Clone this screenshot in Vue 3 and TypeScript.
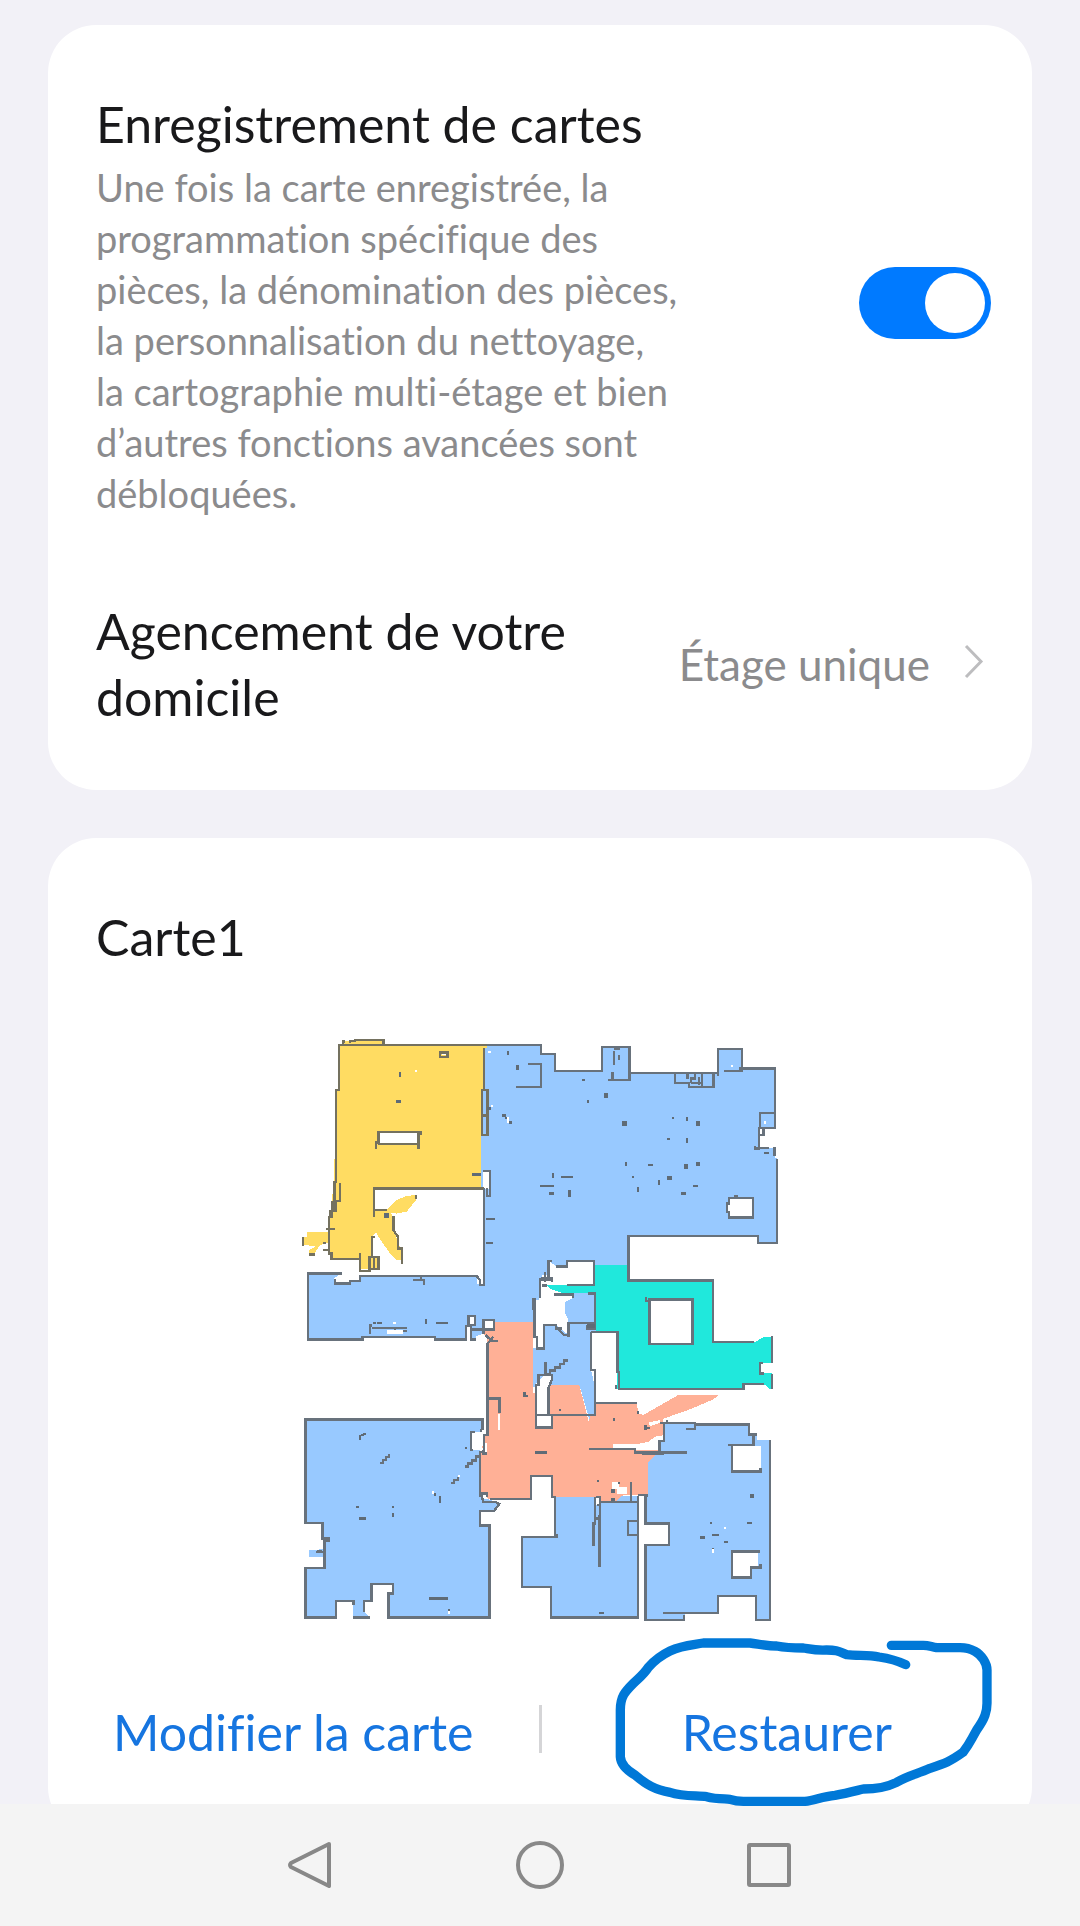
<script setup lang="ts">
import { ref } from 'vue'

const saveMaps = ref(true)

const descriptionLines: string[] = [
  'Une fois la carte enregistrée, la',
  'programmation spécifique des',
  'pièces, la dénomination des pièces,',
  'la personnalisation du nettoyage,',
  'la cartographie multi-étage et bien',
  'd’autres fonctions avancées sont',
  'débloquées.',
]

// Small obstacles detected on the floor: [x, y, width, height]
const obstacles: number[][] = [
  [327, 127, 6, 13], [318, 210, 15, 9], [651, 63, 6, 11], [678, 105, 9, 14], [637, 252, 12, 9], [645, 260, 6, 8], [657, 273, 8, 8],
  [876, 147, 9, 6], [891, 210, 6, 9], [942, 189, 12, 15], [996, 273, 15, 15], [1147, 262, 5, 5], [1188, 261, 6, 12],
  [1218, 273, 12, 15], [1131, 324, 9, 6], [1188, 324, 6, 15], [1005, 396, 6, 12], [1074, 402, 15, 6], [1182, 402, 12, 14],
  [1218, 396, 12, 12], [1026, 438, 6, 6], [1131, 438, 15, 12], [1104, 450, 6, 15], [1041, 471, 6, 15], [1173, 486, 15, 9],
  [1209, 465, 15, 6], [786, 429, 6, 15], [813, 438, 36, 6], [750, 465, 42, 6], [777, 486, 15, 9], [834, 480, 9, 21],
  [282, 549, 15, 15], [546, 429, 28, 9], [587, 564, 28, 6], [587, 636, 22, 6], [592, 232, 12, 7],
  [249, 876, 9, 6], [262, 876, 14, 6], [405, 867, 6, 14], [438, 876, 36, 6], [699, 1086, 9, 15], [705, 1095, 9, 6],
  [207, 1215, 6, 15], [213, 1212, 9, 6], [219, 1208, 9, 6], [198, 1428, 9, 6], [207, 1461, 21, 9], [306, 1428, 6, 6],
  [306, 1449, 6, 12], [432, 1390, 6, 7], [447, 1398, 6, 20], [417, 1701, 57, 9], [474, 1737, 6, 8], [525, 1251, 6, 6],
  [807, 1137, 6, 6], [969, 1165, 6, 7], [735, 1263, 36, 9], [921, 1350, 6, 6], [964, 1377, 12, 12], [984, 1356, 6, 6],
  [964, 1403, 12, 10], [927, 1745, 15, 7], [1380, 1392, 12, 12], [1371, 1476, 15, 6], [1260, 1476, 6, 6], [1230, 1518, 15, 9],
  [1266, 1512, 21, 6], [1302, 1533, 12, 6], [1266, 1554, 6, 8], [1062, 1185, 9, 14], [1071, 1190, 9, 6], [1041, 1144, 6, 8],
  [892, 882, 22, 12], [1422, 366, 15, 6],
]

// Unscanned specks inside rooms
const specks: number[][] = [
  [594, 63, 9, 6], [375, 120, 6, 6], [602, 225, 6, 7], [651, 262, 6, 18], [1323, 105, 6, 6], [1422, 273, 6, 9],
  [624, 1152, 6, 48], [426, 1383, 6, 9], [504, 1336, 6, 6], [474, 1743, 6, 8], [1302, 1491, 7, 7], [1266, 1558, 6, 11],
  [309, 876, 8, 6], [291, 900, 48, 12],
]
</script>

<template>
  <div class="screen">
    <main class="content">
      <section class="card">
        <div class="row">
          <div class="text">
            <label class="title" for="save-maps">Enregistrement de cartes</label>
            <p id="save-desc" class="description">
              <template v-for="(line, i) in descriptionLines" :key="i">{{ line }}<br v-if="i < descriptionLines.length - 1"></template>
            </p>
          </div>
          <input id="save-maps" v-model="saveMaps" class="switch" type="checkbox" role="switch" aria-describedby="save-desc">
        </div>
        <button class="row layout" type="button">
          <span class="title layout-name">Agencement de votre domicile</span>
          <span class="value">Étage unique</span>
          <svg class="chevron" viewBox="0 0 20 36" aria-hidden="true"><path d="M2 2 17 17.500 2 33" /></svg>
        </button>
      </section>

      <section class="card map-card">
        <h2 class="title">Carte1</h2>
        <svg class="map" viewBox="0 0 1500 1800" role="img" aria-label="Carte1" shape-rendering="crispEdges">
          <g class="blue">
            <path d="M582 45H753V72H795V123H936V50H1018V130H1284V57H1356V115H1455V293H1407V355H1455V385H1461V638H1404V618H1015V705H911V693H830V708H798L775 693V735H757V750H747V810H728V875H612L582 925H528V928H434V921H217V928H54V730H155L132 745V762H180V752H210V738H560V762H582V475H574V180H582Z" />
            <path d="M840 790H917V905H903V1020L917 1080V1155L900 1175 868 1065H785L775 1035 738 1070H728V955H760V885H800L835 915 830 870 822 850V820L840 805Z" />
            <path d="M46 1168H577V1205H543V1260H570V1400L625 1418 612 1443H570V1486H598V1762H295V1690H308V1662H244V1712H222V1745L240 1762H190V1712H137V1762H46V1614H103V1580H57V1560L97 1558 117 1525H97V1479H46Z" />
            <path d="M795 1398H1073V1420H1044V1762H782V1671H696V1520H795Z" />
            <path d="M1120 1178H1215V1183H1376V1213H1400V1230H1440V1770H1398V1698H1284V1748H1184V1770H1066V1545H1136V1480H1066V1290L1108 1265V1235H1120Z" />
          </g>
          <path class="yellow" d="M146 45H590V55H582V180H574V475H252V540H290L320 510 350 498 378 495V510L350 545 320 551 300 548 310 560V600L322 630 335 665V690H320L300 670 275 635 258 608 245 620V678H265V718H210V687H122V560H117V600L125 515 132 455 138 180H146ZM50 605H120V640H100L88 648 75 668 58 670V660L78 650 50 645H38V620H50ZM158 40 170 32 195 30H280V45H158ZM117 560H130V690H122ZM125 510H140V560H122Z" />
          <path class="teal" d="M911 705H1015V751H1269V935H1398L1420 921H1447V1077H980V905H917V790H795L768 765H911Z" />
          <path class="pink" d="M590 875H728V975H730V1090H738V1195H785V1155H775V1065H868L896 1175 902 1155H915V1118H1040L1045 1150 1060 1155 1165 1095H1287L1270 1108 1195 1140 1120 1166V1235H1107V1265L1073 1300V1395H1040L1000 1395 978 1413H930V1400H785V1338H722V1407H600L570 1400V1275L592 1200V940L575 905Z" />

          <g class="white">
            <path d="M265 308H385V341H265ZM580 422H600V476H580ZM456 68H468V75H456Z" />
            <path d="M1317 503H1389V562H1317V548H1311V520H1317ZM1078 808H1207V941H1078ZM1410 998H1447V1030H1410ZM1365 1065H1425L1438 1075V1081H1365Z" />
            <path d="M535 860H555V887H540V925H530V888H535ZM575 870H612V898H590L580 912 592 920V948H558V920L575 912Z" />
            <path d="M747 750 775 775 820 790 848 798 848 805 825 815V850L835 870V915L820 900 800 885H762V955H738V920L730 850V810H747Z" />
            <path d="M775 695 800 710H830V695H911V765H790L775 745ZM903 905H980V1077H985V1118H917V1080L903 1020ZM737 1062 765 1035 785 1040 775 1075V1155H785V1195H738Z" />
            <path d="M970 1242H1045L1075 1235 1100 1218 1120 1216V1230H1108V1260H1060L1030 1258H970ZM1075 1178 1110 1170V1178L1080 1189ZM965 1357H988V1370H1011V1392H980V1378H965ZM1044 1398H1066V1770H1044ZM1066 1480H1136V1545H1066Z" />
            <path d="M1326 1247H1412V1324H1326ZM1326 1564H1405V1610H1385V1642H1326ZM543 1205H555V1210H575V1200H585V1240H592V1270H570L580 1250 560 1235 545 1260ZM572 1392H590V1407H572ZM612 1405H628V1416H612ZM915 1400H928V1425H915Z" />
          </g>

          <g class="wall yellow-wall">
            <path d="M590 45H146V180H138V455H133V515H125V560H117V670H124V687H210V722H238V680H265V716H238M252 680V716M158 42V34H165M180 40V32H195V30H280V45M582 55V180M576 180H592V315H576ZM576 256H592M265 341V306H393V315M385 310V358M265 341H385M258 358V332M149 460V512H133V545M138 515V545M120 560V540M582 475H252V562M254 540H290M310 558V600L324 620V655H335V703M245 680V620H255M210 670V722M108 597H134M39 621V647M58 673H76M100 660H117M100 638H108M378 495V507M450 67H472V81H450Z" />
          </g>
          <g class="wall">
            <path d="M590 45H753V72H795V123H936V50H1018V150H955M967 147V127M972 62V104M987 75V90M972 57H990M1018 129H1284M1284 137V57H1356V122H1302M1348 115H1455V293H1407V355H1395V348M1455 248H1409V290M1407 315H1420V293M1407 353H1437M1453 352V378M1461 387V638H1404V618H1015V751H1269V935H1392M1154 130V158H1196V170H1270V132M1235 130V170M1192 132V146M1202 158H1235M1215 130V145H1202V158M1226 140V165M714 101H753V171H678M720 45H753" />
            <path d="M1317 503H1389V562H1317V545H1311V520H1317ZM1332 497H1344M580 422H600V498H590V475M582 475V765H570V750L560 738H210V752H180V760H134V748M155 730H54V928H217V921H434V928H528V888H535V858H555V885H543V928H558M370 750H402V766M392 737V747M543 898H580V912M575 870H612V898H580V870ZM586 915 605 932H624M590 945 610 920M592 940V1215H582V1270M592 1105H628V1150" />
            <path d="M240 911V886H245M245 894H352M315 894V902H352M750 745V805M728 840V808H733V920H740V955H761V885H798V895H815M800 892 822 915H832M835 920V878H915M892 885V895H915V790H893M848 805V793H792M755 766H770M757 740V750H790M765 727V755M758 745H785V755M775 740V693H786M798 709H830V693H911V765H830M903 905H982V1025H986V1077H1360V1062H1422M980 1068H977V1077M903 905V1020H914V1155H738V1065H745V1035H785V1050L775 1075V1155H785V1192H738V1062M766 996V1035M917 1118H1040M1410 1030V998H1420M1410 998V1030H1422M1446 918V1000M1446 1032V1077M1078 808H1207V941H1078ZM1068 800V812H1078" />
            <path d="M577 1200V1168H46V1479H97V1525H117V1533H103V1565M78 1565H103V1614H46V1762H137V1712H190V1725M190 1762H240M222 1745V1712H244V1662H308V1690H295V1762H598V1486H570V1443H612L628 1422 615 1415H580L572 1390H590V1400M577 1201H570M555 1205H543V1260H550M582 1265H570V1400M592 1270H578V1260M600 1407H722V1338H785V1400H795V1520H696V1671H782V1762H1044V1415H930V1530M800 1513V1525M915 1400V1480H910V1547M912 1465H925M917 1400H930V1425H920M928 1455V1610M1023 1357V1413M1044 1473H1013V1515H1044M1044 1395H1073M1044 1398V1762M1073 1398H1066V1480H1136V1545H1066V1770H1182V1755M1120 1748H1284V1698H1398V1770H1440V1230M1402 1213H1376V1183H1215V1178H1110M1215 1180V1197H1188M1390 1212V1245H1315M1326 1246V1324H1411V1315M1405 1570V1564H1326V1642H1383V1612H1411V1602M1122 1178V1232H1108V1265M898 1257H1035V1267H1192M1055 1272H1122M1130 1170V1180" />
          </g>
          <g class="debris">
            <path d="M270 1299H279V1290H288V1281H297V1272M525 1310H534V1300H546V1291H558V1280H572M483 1359H492V1350H504V1341M768 1032H780V1022H795V1012H810V1002H822V992H834M97 1565H80" />
            <path d="M897 1257H968" />
          </g>
          <rect v-for="(o, i) in obstacles" :key="i" class="obstacle" :x="o[0]" :y="o[1]" :width="o[2]" :height="o[3]" />
          <rect v-for="(s, i) in specks" :key="'s' + i" class="speck" :x="s[0]" :y="s[1]" :width="s[2]" :height="s[3]" />
        </svg>
        <div class="actions">
          <button class="action" type="button">Modifier la carte</button>
          <span class="divider"></span>
          <button class="action" type="button">
            Restaurer
            <svg class="highlight" viewBox="0 0 1320 660" aria-hidden="true">
              <path d="M977 164C950 151 925 145 897 141C865 134 835 138 800 134C775 124 770 120 740 120C710 122 695 118 670 114C640 114 620 114 590 108C560 108 540 103 510 99H370C340 105 310 104 270 123C235 140 220 155 205 172C190 195 175 205 160 220C135 245 121 260 121 300V440C122 460 140 480 165 495C200 525 225 539 270 547C310 560 350 556 380 560C410 568 435 566 450 568C465 573 480 574 490 574H675C705 571 725 560 765 556C800 550 825 543 850 537C885 537 915 534 950 517C985 496 1010 493 1050 475C1095 460 1110 455 1149 427C1170 400 1170 395 1190 360C1215 325 1221 305 1221 280V180C1221 160 1205 135 1185 124C1160 110 1145 113 1130 113H1070C1050 109 1045 106 1030 106H934" />
            </svg>
          </button>
        </div>
      </section>
    </main>

    <nav class="system-nav" aria-label="Navigation système">
      <button type="button" aria-label="Retour"><svg viewBox="0 0 48 48"><path d="M43 3 5 22Q3 24 5 26L43 45Z" /></svg></button>
      <button type="button" aria-label="Accueil"><svg viewBox="0 0 48 48"><circle cx="24" cy="24" r="22" /></svg></button>
      <button type="button" aria-label="Applications récentes"><svg viewBox="0 0 48 48"><rect x="3" y="4" width="40" height="40" rx="1" /></svg></button>
    </nav>
  </div>
</template>

<style>
body {
  margin: 0;
  background: #f2f1f7;
}
</style>

<style scoped>
.screen {
  display: flex;
  flex-direction: column;
  height: 100vh;
  color: #19191b;
  font-family: Lato, "Noto Sans", sans-serif;
  font-variant-ligatures: none;
}
.content {
  flex: 1;
  min-height: 0;
  padding: 25px 48px 0;
}
button {
  padding: 0;
  border: 0;
  background: none;
  color: inherit;
  font: inherit;
  font-variant-ligatures: inherit;
  text-align: left;
}
.card {
  box-sizing: border-box;
  padding: 66px 41px 60px 48px;
  border-radius: 48px;
  background: #fff;
}
.row {
  display: flex;
  align-items: center;
  justify-content: space-between;
  width: 100%;
}
.title {
  display: block;
  margin: 0;
  font-size: 50px;
  font-weight: 400;
  line-height: 66px;
}
.description {
  margin: 5px 0 0;
  color: #8b8b8d;
  font-size: 38px;
  line-height: 51px;
}
.switch {
  appearance: none;
  flex: none;
  width: 132px;
  height: 72px;
  margin: 0 0 5px;
  padding: 6px;
  border-radius: 36px;
  background: #b9b9bd;
}
.switch::before {
  content: "";
  display: block;
  width: 60px;
  height: 60px;
  border-radius: 50%;
  background: #fff;
}
.switch:checked {
  background: #007aff;
}
.switch:checked::before {
  margin-left: auto;
}
.layout {
  margin-top: 79px;
}
.layout-name {
  width: 500px;
  margin-right: auto;
}
.value {
  color: #8b8b8d;
  font-size: 44px;
}
.chevron {
  width: 20px;
  height: 36px;
  margin: 0 7px 4px 34px;
  fill: none;
  stroke: #bdbdbf;
  stroke-width: 3;
}
.map-card {
  margin-top: 48px;
  padding: 66px 48px 43px;
}
.map {
  display: block;
  width: 500px;
  margin: 60px auto 0;
}
.blue { fill: #98c9ff; }
.yellow { fill: #ffdc62; }
.teal { fill: #20e8dc; }
.pink { fill: #ffb096; }
.white,
.speck { fill: #fff; }
.wall {
  fill: none;
  stroke: #68727c;
  stroke-width: 7;
}
.yellow-wall { stroke: #74715f; }
.debris {
  fill: none;
  stroke: #68727c;
  stroke-width: 8;
}
.obstacle { fill: #5f6b76; }
.actions {
  display: grid;
  grid-template-columns: 1fr 3px 1fr;
  align-items: center;
  height: 120px;
  margin: 42px -48px 0;
}
.action {
  position: relative;
  color: #1675e0;
  font-size: 50px;
  line-height: 66px;
  text-align: center;
}
.divider {
  height: 48px;
  margin-bottom: 6px;
  background: #d5d5d7;
}
.highlight {
  position: absolute;
  z-index: 2;
  top: -89px;
  left: 38px;
  width: 440px;
  height: 220px;
  fill: none;
  stroke: #0078d7;
  stroke-width: 28;
  stroke-linecap: round;
  stroke-linejoin: round;
  pointer-events: none;
}
.system-nav {
  z-index: 1;
  display: flex;
  align-items: center;
  justify-content: center;
  gap: 182px;
  height: 122px;
  background: #f4f4f4;
}
.system-nav button {
  width: 48px;
  height: 48px;
}
.system-nav svg {
  display: block;
  fill: none;
  stroke: #888;
  stroke-width: 4;
  stroke-linejoin: round;
}
</style>
